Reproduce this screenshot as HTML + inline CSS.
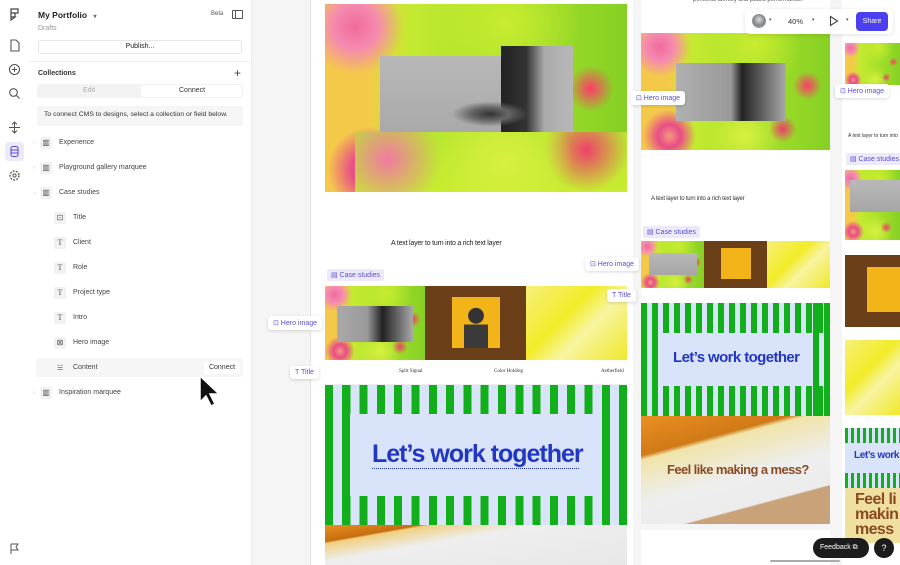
<!DOCTYPE html>
<html><head><meta charset="utf-8">
<style>
*{margin:0;padding:0;box-sizing:border-box}
body{width:900px;height:565px;overflow:hidden;background:#f5f5f5;font-family:"Liberation Sans",sans-serif;position:relative;color:#222}
.abs{position:absolute}
.rail{left:0;top:0;width:28px;height:565px;background:#fff}
.panel{left:28px;top:0;width:224px;height:565px;background:#fff;border-right:1px solid #ececec}
.ic{position:absolute;left:8px;width:13px;height:13px;color:#555}
.t{position:absolute;font-size:7px;color:#333;white-space:nowrap}
.row .i{position:absolute;width:12px;height:12px;background:#f2f2f2;border-radius:2px;font-size:8px;color:#555;text-align:center;line-height:12px;font-family:"Liberation Serif",serif}
.collage{background:
 radial-gradient(circle at 10% 12%,#f06a9a 0,#f58ab0 7%,transparent 15%),
 radial-gradient(circle at 88% 45%,#ff3a6a 0,transparent 8%),
 radial-gradient(circle at 75% 82%,#ee3c6a 0,transparent 8%),
 radial-gradient(circle at 15% 88%,#f29a7a 0,#e94c88 6%,transparent 14%),
 radial-gradient(circle at 55% 88%,#d8f040 0,transparent 25%),
 radial-gradient(circle at 60% 10%,#c8ec30 0,transparent 30%),
 linear-gradient(90deg,#f4c94a 0,#f4c94a 14%,#c4ea30 28%,#a6e02a 60%,#86d024 100%);overflow:hidden}
.gray{background:linear-gradient(180deg,#b8b8b8,#a6a6a6);}
.tag{position:absolute;font-size:7px;color:#5b4fd6;background:#ece9fb;padding:2px 4px;border-radius:2px;white-space:nowrap}
.lbl{position:absolute;font-size:7px;color:#5b4fd6;background:#fff;padding:3px 5px;border-radius:3px;box-shadow:0 1px 3px rgba(0,0,0,.15);white-space:nowrap}
.brown{background:#6b4019}
.ysq{background:#f2b418;position:absolute}
.yel{background:linear-gradient(135deg,#f6f07a,#f2ec28 40%,#f8f4a0 60%,#efe82a)}
.green{background:#d9e4fb;position:absolute;overflow:hidden}
.stripes{position:absolute;background:repeating-linear-gradient(90deg,#11b01a 0,#11b01a 8px,#d9e4fb 8px,#d9e4fb 17.3px)}
.lwt{position:absolute;font-weight:bold;color:#2236c4;letter-spacing:-1px;white-space:nowrap;font-family:"Liberation Sans Narrow","Liberation Sans",sans-serif}
.film{background:linear-gradient(170deg,#e99020 0,#c66e10 18%,#f0d080 20%,#eeeeee 40%,#e8e8e8)}
</style></head><body>

<div class="abs rail">
 <svg class="ic" style="top:8px" viewBox="0 0 13 13"><path d="M3 1h7v4H3zM3 5h4v4H3zM3 9h4l-4 3z" fill="none" stroke="#444" stroke-width="1.2"/></svg>
 <svg class="ic" style="top:39px" viewBox="0 0 13 13"><path d="M3 1h5l3 3v8H3z" fill="none" stroke="#555" stroke-width="1.1"/></svg>
 <svg class="ic" style="top:63px" viewBox="0 0 13 13"><circle cx="6.5" cy="6.5" r="5" fill="none" stroke="#555" stroke-width="1.1"/><path d="M6.5 4v5M4 6.5h5" stroke="#555"/></svg>
 <svg class="ic" style="top:87px" viewBox="0 0 13 13"><circle cx="5.5" cy="5.5" r="3.8" fill="none" stroke="#555" stroke-width="1.1"/><path d="M8.5 8.5l3 3" stroke="#555" stroke-width="1.2"/></svg>
 <svg class="ic" style="top:121px" viewBox="0 0 13 13"><path d="M6.5 1v11M1 6.5h11M4 3.5l2.5-2.5 2.5 2.5M4 9.5l2.5 2.5 2.5-2.5" fill="none" stroke="#555"/></svg>
 <div class="abs" style="left:5px;top:142px;width:19px;height:19px;background:#ece9fb;border-radius:4px"></div>
 <svg class="ic" style="top:145px" viewBox="0 0 13 13"><rect x="3" y="1.5" width="7" height="10" rx="2" fill="none" stroke="#5b4fd6" stroke-width="1.1"/><path d="M3 5h7M3 8h7" stroke="#5b4fd6"/></svg>
 <svg class="ic" style="top:169px" viewBox="0 0 13 13"><circle cx="6.5" cy="6.5" r="4.5" fill="none" stroke="#555" stroke-width="1.3" stroke-dasharray="2 1.2"/><circle cx="6.5" cy="6.5" r="1.6" fill="none" stroke="#555"/></svg>
 <svg class="ic" style="top:542px" viewBox="0 0 13 13"><path d="M3 2v10M3 2h7l-2 3 2 3H3" fill="none" stroke="#555"/></svg>
</div>

<div class="abs panel">
 <div class="t" style="left:10px;top:10px;font-size:8.5px;font-weight:bold;color:#222">My Portfolio <span style="font-size:6px;color:#666;margin-left:4px">▾</span></div>
 <div class="t" style="left:10px;top:25px;color:#999">Drafts</div>
 <div class="t" style="left:183px;top:11px;font-size:6px;color:#555">Beta</div>
 <div class="abs" style="left:204px;top:10px;width:11px;height:9px;border:1.2px solid #555;border-radius:1px"><div style="position:absolute;left:2px;top:0;width:1px;height:100%;background:#555"></div></div>
 <div class="abs" style="left:10px;top:40px;width:204px;height:14px;border:1px solid #e6e6e6;border-radius:3px;font-size:7px;text-align:center;line-height:12px">Publish...</div>
 <div class="abs" style="left:0;top:61px;width:223px;height:1px;background:#f0f0f0"></div>
 <div class="t" style="left:10px;top:70px;font-weight:bold;font-size:7px">Collections</div>
 <div class="t" style="left:206px;top:66px;font-size:12px;color:#444">+</div>
 <div class="abs" style="left:9px;top:84px;width:206px;height:14px;background:#f3f3f3;border-radius:3px"></div>
 <div class="abs" style="left:113px;top:85px;width:101px;height:12px;background:#fff;border-radius:3px"></div>
 <div class="t" style="left:55px;top:87px;color:#aaa">Edit</div>
 <div class="t" style="left:151px;top:87px;color:#333">Connect</div>
 <div class="abs" style="left:9px;top:106px;width:206px;height:20px;background:#f5f5f5;border-radius:3px"></div>
 <div class="t" style="left:16px;top:111px;font-size:6.8px;color:#333">To connect CMS to designs, select a collection or field below.</div>
 <div class="row">
  <div class="t" style="left:5px;top:140px;color:#bbb;font-size:5px">›</div><div class="i" style="left:12px;top:137px">▥</div><div class="t" style="left:31px;top:139px;color:#444">Experience</div>
  <div class="t" style="left:5px;top:165px;color:#bbb;font-size:5px">›</div><div class="i" style="left:12px;top:162px">▥</div><div class="t" style="left:31px;top:164px;color:#444">Playground gallery marquee</div>
  <div class="t" style="left:5px;top:190px;color:#bbb;font-size:5px">⌄</div><div class="i" style="left:12px;top:187px">▥</div><div class="t" style="left:31px;top:189px;color:#444">Case studies</div>
  <div class="i" style="left:26px;top:212px">⊡</div><div class="t" style="left:45px;top:214px;color:#444">Title</div>
  <div class="i" style="left:26px;top:237px">T</div><div class="t" style="left:45px;top:239px;color:#444">Client</div>
  <div class="i" style="left:26px;top:262px">T</div><div class="t" style="left:45px;top:264px;color:#444">Role</div>
  <div class="i" style="left:26px;top:287px">T</div><div class="t" style="left:45px;top:289px;color:#444">Project type</div>
  <div class="i" style="left:26px;top:312px">T</div><div class="t" style="left:45px;top:314px;color:#444">Intro</div>
  <div class="i" style="left:26px;top:337px">⊠</div><div class="t" style="left:45px;top:339px;color:#444">Hero image</div>
  <div class="abs" style="left:8px;top:358px;width:207px;height:19px;background:#f6f6f6;border-radius:3px"></div>
  <div class="t" style="left:29px;top:364px;color:#555">☱</div><div class="t" style="left:45px;top:364px;color:#444">Content</div>
  <div class="abs" style="left:176px;top:361px;width:36px;height:13px;background:#fff;border-radius:3px;font-size:7px;line-height:13px;text-align:center;color:#333">Connect</div>
  <div class="t" style="left:5px;top:390px;color:#bbb;font-size:5px">›</div><div class="i" style="left:12px;top:387px">▥</div><div class="t" style="left:31px;top:389px;color:#444">Inspiration marquee</div>
 </div>
</div>

<!-- canvas frames -->
<div class="abs" style="left:310px;top:0;width:1px;height:565px;background:#e2e2e2"></div>
<div class="abs" style="left:311px;top:0;width:322px;height:565px;background:#fff"></div>
<div class="abs" style="left:641px;top:0;width:189px;height:524px;background:#fff"></div>
<div class="abs" style="left:641px;top:530px;width:189px;height:35px;background:#fff"></div>
<div class="abs" style="left:842px;top:0;width:58px;height:565px;background:#fff"></div>

<!-- frame 1 -->
<div class="abs collage" style="left:325px;top:4px;width:302px;height:188px">
 <div class="abs gray" style="left:55px;top:52px;width:122px;height:92px"></div>
 <div class="abs gray" style="left:176px;top:42px;width:72px;height:92px;background:linear-gradient(90deg,#222 0,#333 35%,#aaa 60%,#b8b8b8)"></div>
 <div class="abs" style="left:120px;top:95px;width:90px;height:30px;background:radial-gradient(ellipse,#333 0,#666 30%,transparent 60%)"></div>
 <div class="abs" style="left:30px;top:128px;width:272px;height:60px;background:radial-gradient(circle at 12% 45%,#f07aa0,transparent 22%),radial-gradient(circle at 55% 50%,#d8f040,transparent 45%),radial-gradient(circle at 85% 30%,#f0406a,transparent 18%),linear-gradient(#b8e630,#c8ec30)"></div>
</div>
<div class="t" style="left:391px;top:240px;font-size:7px;letter-spacing:-.2px;color:#222">A text layer to turn into a rich text layer</div>
<div class="tag" style="left:327px;top:269px">▤ Case studies</div>
<div class="abs collage" style="left:325px;top:286px;width:100px;height:74px"><div class="abs gray" style="left:12px;top:20px;width:76px;height:36px;background:linear-gradient(90deg,#aaa,#999 40%,#222 60%,#aaa)"></div></div>
<div class="abs brown" style="left:425px;top:286px;width:101px;height:74px"><div class="ysq" style="left:27px;top:11px;width:48px;height:51px"><div class="abs" style="left:12px;top:8px;width:24px;height:43px;background:radial-gradient(circle at 50% 25%,#333 0,#333 22%,transparent 24%),linear-gradient(#f2b418 45%,#3a3a3a 45%);border-radius:8px 8px 0 0"></div></div></div>
<div class="abs yel" style="left:526px;top:286px;width:101px;height:74px"></div>
<div class="abs" style="left:325px;top:360px;width:302px;height:25px;background:#fff;border-bottom:1px solid #eee"></div>
<div class="t" style="left:399px;top:369px;font-size:5px;font-family:'Liberation Serif',serif">Split Signal</div>
<div class="t" style="left:494px;top:369px;font-size:5px;font-family:'Liberation Serif',serif">Color Holding</div>
<div class="t" style="left:601px;top:369px;font-size:5px;font-family:'Liberation Serif',serif">Aetherfield</div>
<div class="green" style="left:325px;top:385px;width:302px;height:140px">
 <div class="stripes" style="left:0;top:0;width:302px;height:29px"></div>
 <div class="stripes" style="left:0;top:111px;width:302px;height:29px"></div>
 <div class="abs" style="left:0;top:0;width:8px;height:140px;background:#11b01a"></div>
 <div class="abs" style="left:17px;top:0;width:8px;height:140px;background:#11b01a"></div>
 <div class="abs" style="left:277px;top:0;width:8px;height:140px;background:#11b01a"></div>
 <div class="abs" style="left:294px;top:0;width:8px;height:140px;background:#11b01a"></div>
 <div class="abs" style="left:34px;top:29px;width:234px;height:82px;background:#d9e4fb"></div>
 <div class="lwt" style="left:47px;top:55px;font-size:25px">Let’s work together</div>
 <div class="abs" style="left:47px;top:83px;width:207px;border-top:1px dotted #2236c4"></div>
</div>
<div class="abs film" style="left:325px;top:525px;width:302px;height:40px"></div>

<!-- frame 2 -->
<div class="t" style="left:693px;top:-3px;font-size:6px;color:#555">personal identity and public performance.</div>
<div class="abs collage" style="left:641px;top:33px;width:189px;height:117px"><div class="abs gray" style="left:35px;top:30px;width:110px;height:58px;background:linear-gradient(90deg,#b0b0b0,#999 50%,#222 60%,#aaa)"></div></div>
<div class="t" style="left:651px;top:196px;font-size:6px;letter-spacing:-.2px">A text layer to turn into a rich text layer</div>
<div class="tag" style="left:643px;top:226px">▤ Case studies</div>
<div class="abs collage" style="left:641px;top:241px;width:63px;height:47px"><div class="abs gray" style="left:8px;top:12px;width:48px;height:22px"></div></div>
<div class="abs brown" style="left:704px;top:241px;width:63px;height:47px"><div class="ysq" style="left:17px;top:7px;width:30px;height:31px;background:#f2b418"></div></div>
<div class="abs yel" style="left:767px;top:241px;width:63px;height:47px"></div>
<div class="green" style="left:641px;top:303px;width:189px;height:113px">
 <div class="stripes" style="left:0;top:0;width:189px;height:30px;background:repeating-linear-gradient(90deg,#11b01a 0,#11b01a 6px,#d9e4fb 6px,#d9e4fb 11px)"></div>
 <div class="stripes" style="left:0;top:83px;width:189px;height:30px;background:repeating-linear-gradient(90deg,#11b01a 0,#11b01a 6px,#d9e4fb 6px,#d9e4fb 11px)"></div>
 <div class="abs" style="left:0;width:6px;height:113px;background:#11b01a"></div><div class="abs" style="left:11px;width:6px;height:113px;background:#11b01a"></div>
 <div class="abs" style="left:172px;width:6px;height:113px;background:#11b01a"></div><div class="abs" style="left:183px;width:6px;height:113px;background:#11b01a"></div>
 <div class="abs" style="left:22px;top:30px;width:145px;height:53px;background:#d9e4fb"></div>
 <div class="lwt" style="left:32px;top:46px;font-size:15px;letter-spacing:-.6px">Let’s work together</div>
</div>
<div class="abs film" style="left:641px;top:416px;width:189px;height:108px;background:linear-gradient(165deg,#e99020 0,#d07a18 25%,#f0e4a8 28%,#eeeeee 55%,#ececec 75%,#c9a27a 76%,#c9a27a)"></div>
<div class="t" style="left:667px;top:462px;font-size:13px;font-weight:bold;color:#8a4a24;letter-spacing:-.6px">Feel like making a mess?</div>

<!-- frame 3 -->
<div class="abs collage" style="left:845px;top:43px;width:55px;height:42px"></div>
<div class="t" style="left:848px;top:133px;font-size:5px">A text layer to turn into</div>
<div class="tag" style="left:846px;top:153px">▤ Case studies</div>
<div class="abs collage" style="left:845px;top:170px;width:55px;height:70px"><div class="abs gray" style="left:5px;top:10px;width:50px;height:32px"></div></div>
<div class="abs brown" style="left:845px;top:255px;width:55px;height:72px"><div class="ysq" style="left:22px;top:12px;width:33px;height:45px"></div></div>
<div class="abs yel" style="left:845px;top:340px;width:55px;height:75px"></div>
<div class="abs" style="left:845px;top:428px;width:55px;height:60px;background:#d9e4fb">
 <div class="stripes" style="left:0;top:0;width:55px;height:15px;background:repeating-linear-gradient(90deg,#11b01a 0,#11b01a 3px,#d9e4fb 3px,#d9e4fb 6px)"></div>
 <div class="stripes" style="left:0;top:45px;width:55px;height:15px;background:repeating-linear-gradient(90deg,#11b01a 0,#11b01a 3px,#d9e4fb 3px,#d9e4fb 6px)"></div>
 <div class="lwt" style="left:9px;top:22px;font-size:10px;letter-spacing:-.4px">Let’s work to</div>
</div>
<div class="abs" style="left:845px;top:488px;width:55px;height:55px;background:#f0e0a0"></div>
<div class="t" style="left:855px;top:492px;font-size:16px;line-height:15px;font-weight:bold;color:#8a4a24;letter-spacing:-.6px">Feel li<br>makin<br>mess</div>

<!-- labels -->
<div class="lbl" style="left:268px;top:316px">⊡ Hero image</div>
<div class="lbl" style="left:290px;top:366px">T Title</div>
<div class="lbl" style="left:585px;top:257px">⊡ Hero image</div>
<div class="lbl" style="left:607px;top:289px">T Title</div>
<div class="lbl" style="left:631px;top:91px">⊡ Hero image</div>
<div class="lbl" style="left:835px;top:84px">⊡ Hero image</div>

<!-- toolbar -->
<div class="abs" style="left:745px;top:9px;width:148px;height:25px;background:#fff;border-radius:5px;box-shadow:0 1px 4px rgba(0,0,0,.12)"></div>
<div class="abs" style="left:752px;top:14px;width:14px;height:14px;border-radius:50%;background:radial-gradient(circle at 50% 40%,#ddd 0,#888 50%,#9ab 100%)"></div>
<div class="t" style="left:769px;top:17px;font-size:5px;color:#555">▾</div>
<div class="t" style="left:788px;top:17px;font-size:7.5px">40%</div>
<div class="t" style="left:812px;top:17px;font-size:5px;color:#555">▾</div>
<svg class="abs" style="left:829px;top:15px" width="10" height="12" viewBox="0 0 10 12"><path d="M1.5 1.5l7 4.5-7 4.5z" fill="none" stroke="#444" stroke-width="1.1"/></svg>
<div class="t" style="left:846px;top:17px;font-size:5px;color:#555">▾</div>
<div class="abs" style="left:856px;top:12px;width:32px;height:19px;background:#4b3ff0;border-radius:4px;color:#fff;font-size:7px;text-align:center;line-height:19px">Share</div>

<!-- feedback -->
<div class="abs" style="left:813px;top:538px;width:56px;height:20px;background:#1c1c1c;border-radius:10px;color:#fff;font-size:7px;line-height:20px;padding-left:7px">Feedback ⧉</div>
<div class="abs" style="left:874px;top:538px;width:20px;height:20px;background:#1c1c1c;border-radius:50%;color:#fff;font-size:9px;line-height:20px;text-align:center">?</div>
<div class="abs" style="left:770px;top:560px;width:70px;height:2px;background:#aaa;border-radius:1px"></div>

<!-- cursor -->
<svg class="abs" style="left:198px;top:374px" width="24" height="34" viewBox="0 0 24 34"><path d="M2 2v26l6-6 5 10 4-2-5-10h9z" fill="#111" stroke="#fff" stroke-width="1.5"/></svg>
</body></html>
